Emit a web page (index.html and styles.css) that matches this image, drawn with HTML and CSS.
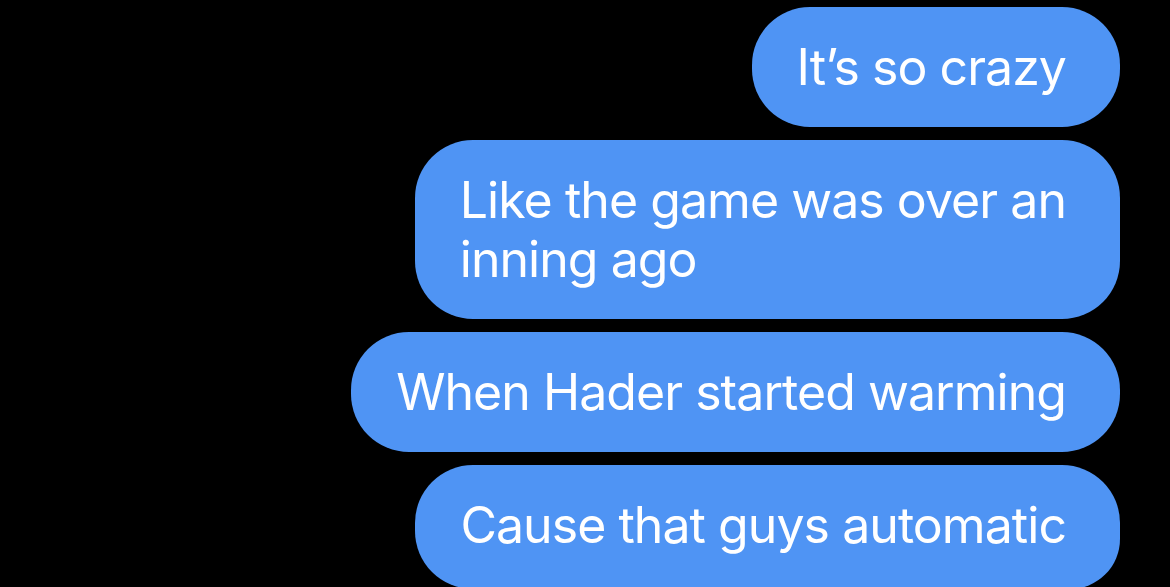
FILE: index.html
```html
<!DOCTYPE html>
<html lang="en">
<head>
<meta charset="utf-8">
<title>Messages</title>
<link rel="stylesheet" href="styles.css">
</head>
<body>
  <main class="thread">
    <div class="bubble">It’s so crazy</div>
    <div class="bubble">Like the game was over an<br>inning ago</div>
    <div class="bubble">When Hader started warming</div>
    <div class="bubble bubble--last">Cause that guys automatic</div>
  </main>
</body>
</html>
```
FILE: styles.css
```css
html, body {
  margin: 0;
  padding: 0;
  background: #000;
  overflow: hidden;
}

.thread {
  display: flex;
  flex-direction: column;
  align-items: flex-end;
  gap: 13px;
  padding: 7px 50px 0 0;
}

.bubble {
  background: #4f94f4;
  color: #fff;
  font-family: "Inter", "Noto Sans", sans-serif;
  font-size: 50px;
  line-height: 59px;
  font-weight: 400;
  letter-spacing: -0.95px;
  padding: 31px 54px 30px 45px;
  border-radius: 58px;
  white-space: nowrap;
}

.bubble--last {
  padding-bottom: 34px;
  border-bottom-right-radius: 50px;
}
```
